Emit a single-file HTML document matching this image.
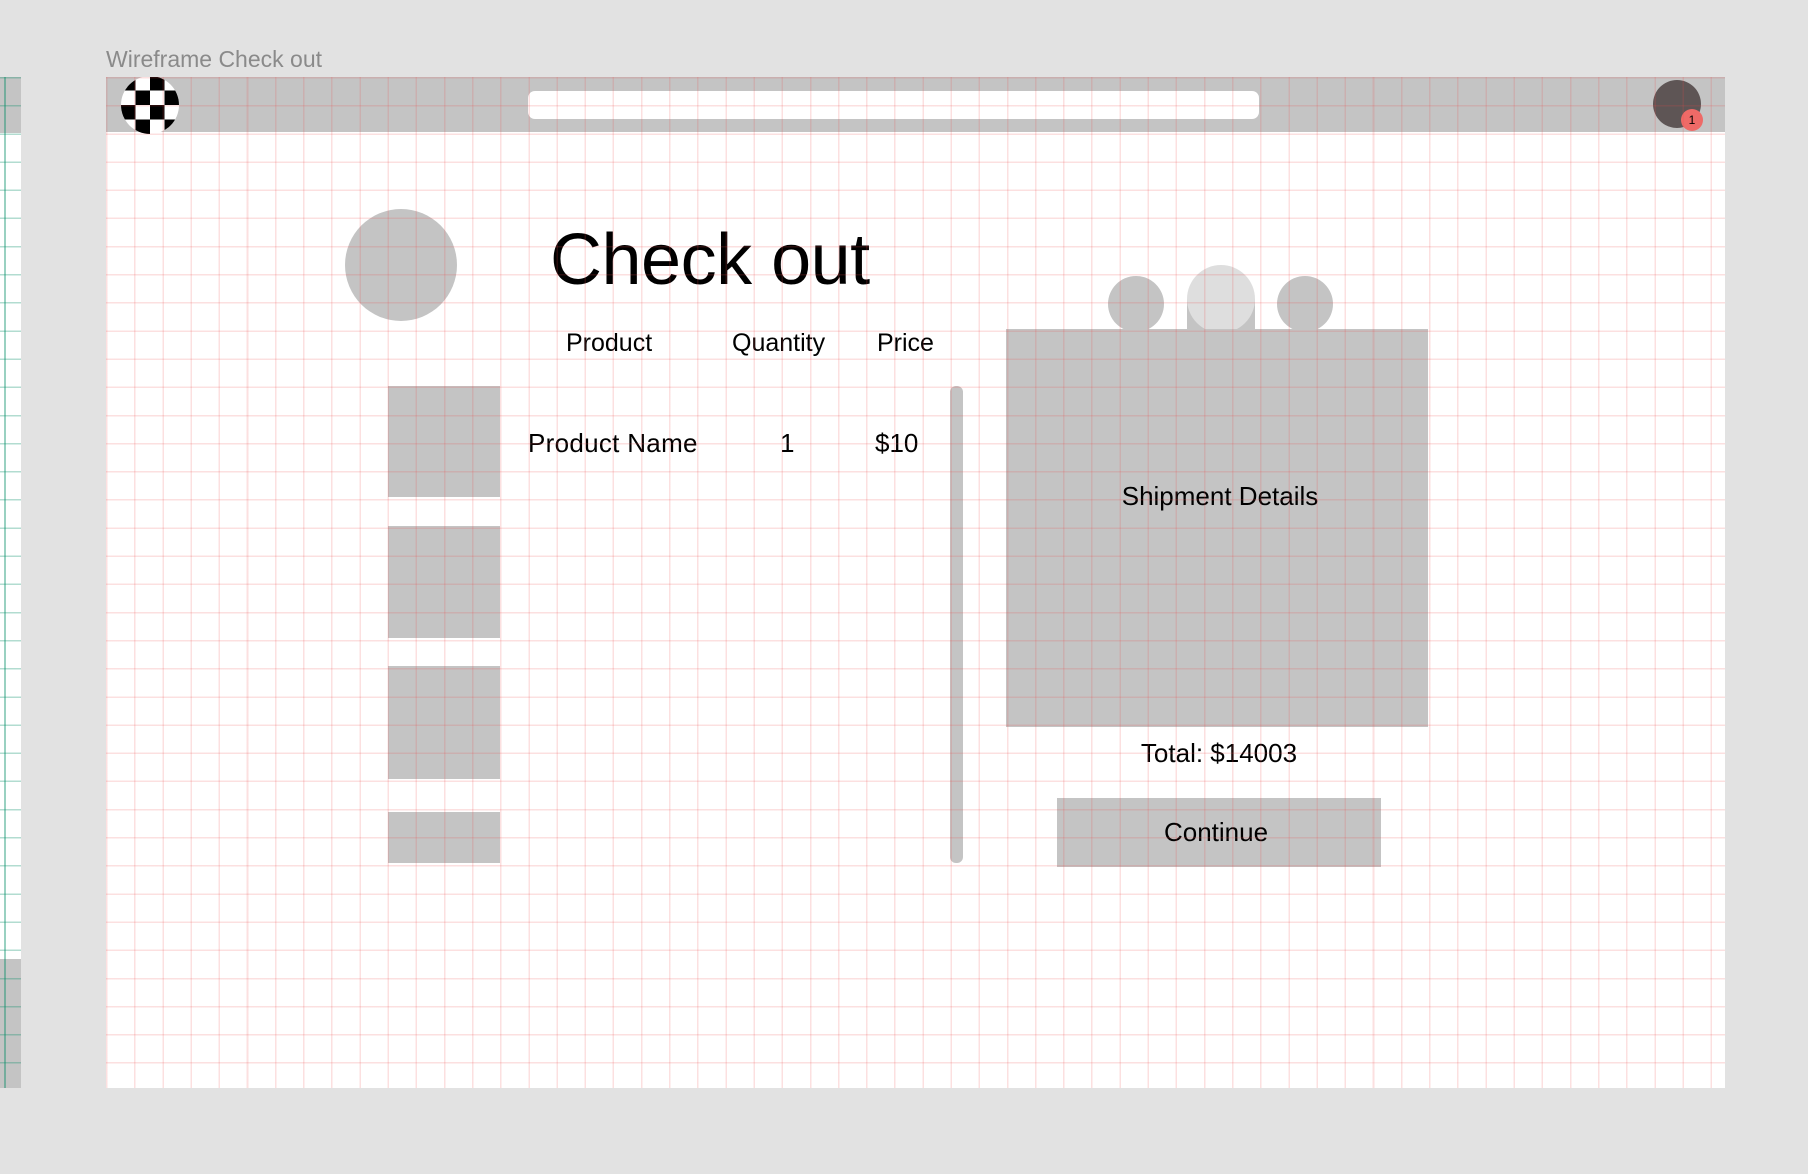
<!DOCTYPE html>
<html><head><meta charset="utf-8"><style>
html,body{margin:0;padding:0;}
body{width:1808px;height:1174px;background:#e2e2e2;position:relative;overflow:hidden;font-family:"Liberation Sans",Arial,sans-serif;color:#000;}
.a{position:absolute;}
.g{background:#c4c4c4;}
.t{position:absolute;line-height:1;white-space:nowrap;}
.c{transform:translateX(-50%);}
</style></head><body>
<div class="t" style="left:106px;top:48px;font-size:23px;color:#8a8a8a;">Wireframe Check out</div>

<!-- left strip -->
<div class="a" style="left:0;top:77px;width:21px;height:1011px;background:#fff;">
  <div class="a g" style="left:0;top:0;width:21px;height:56px;"></div>
  <div class="a g" style="left:0;top:882px;width:21px;height:129px;"></div>
  <div class="a" style="left:0;top:0;width:21px;height:1011px;background:repeating-linear-gradient(to bottom,rgba(0,140,100,.3) 0 1.5px,transparent 1.5px 28.15px);"></div>
  <div class="a" style="left:4px;top:0;width:1.5px;height:1011px;background:rgba(0,140,100,.4);"></div>
</div>

<!-- frame -->
<div class="a" style="left:106px;top:77px;width:1619px;height:1011px;background:#fff;overflow:hidden;">
  <div class="a g" style="left:0;top:0;width:1619px;height:55px;"></div>
  <div class="a" style="left:422px;top:14px;width:731px;height:28px;background:#fff;border-radius:7px;"></div>
  <svg class="a" style="left:15px;top:-1px" width="58" height="58" viewBox="0 0 58 58">
    <defs><clipPath id="cc"><circle cx="29" cy="29" r="29"/></clipPath></defs>
    <g clip-path="url(#cc)">
      <rect width="58" height="58" fill="#fff"/>
      <rect x="0" y="0" width="14.5" height="14.5" fill="#000"/>
      <rect x="29" y="0" width="14.5" height="14.5" fill="#000"/>
      <rect x="14.5" y="14.5" width="14.5" height="14.5" fill="#000"/>
      <rect x="43.5" y="14.5" width="14.5" height="14.5" fill="#000"/>
      <rect x="0" y="29" width="14.5" height="14.5" fill="#000"/>
      <rect x="29" y="29" width="14.5" height="14.5" fill="#000"/>
      <rect x="14.5" y="43.5" width="14.5" height="14.5" fill="#000"/>
      <rect x="43.5" y="43.5" width="14.5" height="14.5" fill="#000"/>
    </g>
  </svg>
  <div class="a" style="left:1547px;top:3px;width:48px;height:48px;border-radius:50%;background:#5e5555;"></div>
  <div class="a" style="left:1575px;top:32px;width:22px;height:22px;border-radius:50%;background:#ee6a67;font-size:12px;line-height:22px;text-align:center;">1</div>

  <div class="a g" style="left:239px;top:132px;width:112px;height:112px;border-radius:50%;"></div>

  <div class="a g" style="left:282px;top:309px;width:112px;height:111px;"></div>
  <div class="a g" style="left:282px;top:449px;width:112px;height:112px;"></div>
  <div class="a g" style="left:282px;top:589px;width:112px;height:113px;"></div>
  <div class="a g" style="left:282px;top:735px;width:112px;height:51px;"></div>

  <div class="a g" style="left:844px;top:309px;width:13px;height:477px;border-radius:6px;"></div>

  <div class="a g" style="left:1002px;top:199px;width:56px;height:56px;border-radius:50%;"></div>
  <div class="a g" style="left:1171px;top:199px;width:56px;height:56px;border-radius:50%;"></div>
  <div class="a g" style="left:1081px;top:222px;width:68px;height:40px;"></div>
  <div class="a" style="left:1081px;top:188px;width:68px;height:68px;border-radius:50%;background:#dedede;"></div>
  <div class="a g" style="left:900px;top:252px;width:422px;height:398px;"></div>
  <div class="a g" style="left:951px;top:721px;width:324px;height:69px;"></div>
</div>

<div class="t" style="left:550px;top:224px;font-size:72px;letter-spacing:-0.5px;">Check out</div>
<div class="t" style="left:566px;top:331px;font-size:25px;">Product</div>
<div class="t" style="left:732px;top:331px;font-size:25px;">Quantity</div>
<div class="t" style="left:877px;top:331px;font-size:25px;">Price</div>
<div class="t" style="left:528px;top:430px;font-size:26px;letter-spacing:0.3px;">Product Name</div>
<div class="t" style="left:780px;top:430px;font-size:26px;">1</div>
<div class="t" style="left:875px;top:430px;font-size:26px;">$10</div>
<div class="t c" style="left:1220px;top:483px;font-size:26px;">Shipment Details</div>
<div class="t c" style="left:1219px;top:740px;font-size:26px;">Total: $14003</div>
<div class="t c" style="left:1216px;top:819px;font-size:26px;">Continue</div>

<!-- grid overlay -->
<div class="a" style="left:106px;top:77px;width:1619px;height:1011px;pointer-events:none;background:repeating-linear-gradient(to right,rgba(235,70,70,.17) 0 1.5px,transparent 1.5px 28.15px),repeating-linear-gradient(to bottom,rgba(235,70,70,.17) 0 1.5px,transparent 1.5px 28.15px);"></div>
</body></html>
